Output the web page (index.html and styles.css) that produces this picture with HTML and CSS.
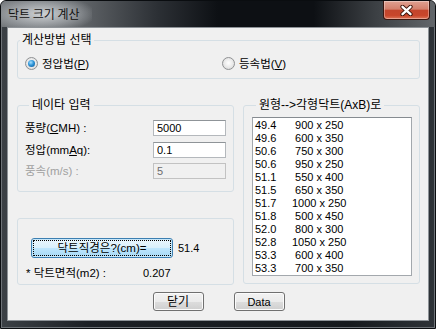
FILE: index.html
```html
<!DOCTYPE html>
<html>
<head>
	<meta charset="utf-8">
	<title>닥트 크기 계산</title>
	<link rel="stylesheet" href="styles.css">
</head>
<body>

	<div class="window">
		<div class="titlebar">
			<span class="title">닥트 크기 계산</span>
			<button class="close" title="닫기">
				<svg width="13" height="11" viewBox="0 0 13 11">
					<path d="M2.5 1.8 L10.5 9.2 M10.5 1.8 L2.5 9.2" stroke="#3a1208" stroke-width="4.2" stroke-linecap="round"/>
					<path d="M2.5 1.8 L10.5 9.2 M10.5 1.8 L2.5 9.2" stroke="#ffffff" stroke-width="2.4" stroke-linecap="round"/>
				</svg>
			</button>
		</div>

		<div class="client">

			<div class="group g-method">
				<div class="legend">계산방법 선택</div>
				<div class="radios">
					<label class="radio checked"><span class="dot"></span>정압법(<u>P</u>)</label>
					<label class="radio"><span class="dot"></span>등속법(<u>V</u>)</label>
				</div>
			</div>

			<div class="main">
				<div class="left">
					<div class="group g-input">
						<div class="legend">데이타 입력</div>
						<div class="fields">
							<label>풍량(<u>C</u>MH) :</label>
							<input type="text" class="num" value="5000">
							<label>정압(mm<u>A</u>q):</label>
							<input type="text" class="num" value="0.1">
							<label class="disabled">풍속(m/s) :</label>
							<input type="text" class="num" value="5" disabled>
						</div>
					</div>

					<div class="group g-result">
						<div class="calc">
							<button class="btn calc-btn">닥트직경은?(cm)=</button>
							<span class="num">51.4</span>
						</div>
						<div class="area">
							<span>* 닥트면적(m2) :</span>
							<span class="num">0.207</span>
						</div>
					</div>
				</div>

				<div class="group g-list">
					<div class="legend">원형--&gt;각형닥트(AxB)로</div>
					<ul class="list num">
						<li><span class="d">49.4</span><span class="s"> 900 x 250</span></li>
						<li><span class="d">49.6</span><span class="s"> 600 x 350</span></li>
						<li><span class="d">50.6</span><span class="s"> 750 x 300</span></li>
						<li><span class="d">50.6</span><span class="s"> 950 x 250</span></li>
						<li><span class="d">51.1</span><span class="s"> 550 x 400</span></li>
						<li><span class="d">51.5</span><span class="s"> 650 x 350</span></li>
						<li><span class="d">51.7</span><span class="s">1000 x 250</span></li>
						<li><span class="d">51.8</span><span class="s"> 500 x 450</span></li>
						<li><span class="d">52.0</span><span class="s"> 800 x 300</span></li>
						<li><span class="d">52.8</span><span class="s">1050 x 250</span></li>
						<li><span class="d">53.3</span><span class="s"> 600 x 400</span></li>
						<li><span class="d">53.3</span><span class="s"> 700 x 350</span></li>
					</ul>
				</div>
			</div>

			<div class="actions">
				<button class="btn">닫기</button>
				<button class="btn num">Data</button>
			</div>

		</div>
	</div>

</body>
</html>
```

FILE: styles.css
```css
body {margin: 0; background: #ffffff;}

.window {width: 436px; height: 329px; box-sizing: border-box; display: flex; flex-direction: column;
		border: 1px solid #0a0d10; border-radius: 6px 6px 0 0; overflow: hidden;
		background: linear-gradient(90deg, #3c4146 0%, #1c2025 20%, #15191d 80%, #2e3338 100%);
		box-shadow: inset 0 0 0 1px #6e7378;}

/* title bar */
.titlebar {height: 26px; flex: none; display: flex; justify-content: space-between; align-items: flex-start;
		background: linear-gradient(90deg, #73777b 0%, #62666a 18%, #2c3035 36%, #0d1014 50%, #0d1014 72%, #3b3f43 86%, #62666a 100%);}
.title {padding: 5px 12px 5px 7px; font: 12px/16px "Noto Sans CJK KR", sans-serif; color: #111111;
		background: radial-gradient(ellipse 60% 70% at 45% 50%, rgba(225,228,230,0.85) 0%, rgba(190,194,198,0.5) 60%, rgba(190,194,198,0) 100%);}
.close {width: 47px; height: 19px; margin: 0 5px 0 0; padding: 0; display: flex; align-items: center; justify-content: center;
		border: 1px solid #3b1710; border-top: none; border-radius: 0 0 4px 4px;
		background: linear-gradient(#dfa192 0%, #d4806c 45%, #c3452c 52%, #c8462b 80%, #dc7458 100%);
		box-shadow: inset 0 0 0 1px rgba(255,255,255,0.35);}

/* client area */
.client {flex: 1; margin: 0 6px 7px; border: 1px solid #8d9297; background: #f0f0f0;
		padding: 12px 0 0 9px; font: 11.5px/14px "Liberation Sans", "Noto Sans CJK KR", sans-serif; color: #000000;}
.num {font-family: "Liberation Sans", sans-serif; font-size: 11px;}

.group {border: 1px solid #d5dfe5; border-radius: 3px; box-sizing: border-box;}
.legend {width: fit-content; height: 16px; line-height: 16px; margin: -9px 0 0 4px; padding: 0 3px; background: #f0f0f0; font-size: 12px;}

.g-method {width: 403px; height: 39px;}
.g-method .legend {margin-left: 2px; padding: 0 2px;}
.radios {display: grid; grid-template-columns: 197px auto; margin-top: 9px; padding-left: 7px;}
.radio {display: flex; align-items: center; gap: 0; height: 13px; white-space: pre;}
.dot {width: 13px; height: 13px; box-sizing: border-box; border-radius: 50%; border: 1px solid #8f9193; margin-right: 4px;
		display: flex; align-items: center; justify-content: center;
		background: radial-gradient(circle at 50% 45%, #ffffff 0%, #e8e8e8 55%, #cfcfcf 100%);}
.checked .dot::after {content: ""; width: 7px; height: 7px; border-radius: 50%;
		background: radial-gradient(circle at 40% 35%, #a8e0ff 0%, #2f95d8 45%, #0b4f8c 100%);}

.main {display: flex; gap: 9px; margin-top: 26px;}
.left {display: flex; flex-direction: column; gap: 26px; width: 217px;}

.g-input {height: 87px; padding-left: 7px;}
.fields {display: grid; grid-template-columns: 128px 73px; grid-auto-rows: 16px; row-gap: 5.5px; align-items: center; margin-top: 7px;}
.fields label {white-space: nowrap;}
.fields input {width: 73px; height: 16px; box-sizing: border-box; margin: 0; padding: 0 3px;
		border: 1px solid #b4b8bc; border-top-color: #8f9498; background: #ffffff; color: #000000; outline: none;}
.fields input:disabled {background: #f0f0f0; color: #6d6d6d; border-color: #c2c2c2;}
.fields .disabled {color: #a0a0a0;}

.g-result {height: 67px; padding: 19px 0 0 8px;}
.calc {display: flex; align-items: center; gap: 5px;}
.area {display: grid; grid-template-columns: 117px auto; margin-top: 8px; line-height: 14px;}

.btn {width: 51px; height: 19px; padding: 0; border: 1px solid #707070; border-radius: 3px; color: #000000;
		font: 12px/14px "Liberation Sans", "Noto Sans CJK KR", sans-serif;
		background: linear-gradient(#f2f2f2 0%, #ebebeb 50%, #dddddd 51%, #cfcfcf 100%);
		box-shadow: inset 0 0 0 1px #fbfbfb;}
.btn.num {font: 11px/14px "Liberation Sans", sans-serif;}
.calc-btn {width: 142px; height: 20px; margin-left: 5px; border-color: #3c7fb1; font-size: 11.5px;
		background: linear-gradient(#eaf6fd 0%, #d9f0fc 50%, #bee6fd 51%, #a7d9f5 100%);
		box-shadow: inset 0 0 0 1px #c7e7fa; outline: 1px dotted #000000; outline-offset: -3px;}

.g-list {width: 177px; height: 179px; padding-left: 8px;}
.list {list-style: none; margin: 4px 0 0; width: 160px; height: 159px; box-sizing: border-box;
		padding: 1px 0 0 2px; border: 1px solid #a3a8ad; border-top-color: #868b90; background: #ffffff;}
.list li {height: 13px; line-height: 13px; white-space: pre;}
.list .d {display: inline-block; width: 37px;}

.actions {width: 403px; display: flex; justify-content: center; gap: 30px; margin-top: 7px;}
```
